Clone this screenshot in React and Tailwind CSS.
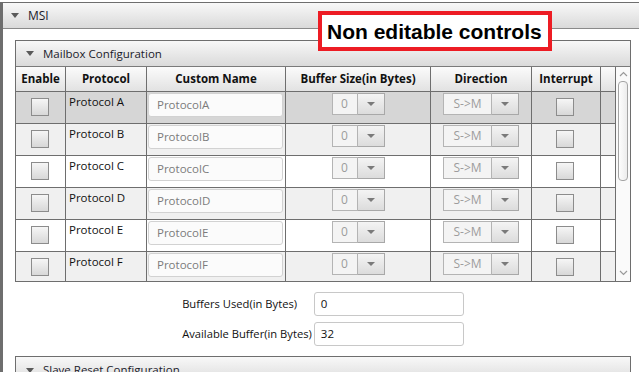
import React from "react";

const rows = [
  { name: "Protocol A", custom: "ProtocolA", bg: "bg-[#d6d6d6]" },
  { name: "Protocol B", custom: "ProtocolB", bg: "bg-[#f0f0f0]" },
  { name: "Protocol C", custom: "ProtocolC", bg: "bg-white" },
  { name: "Protocol D", custom: "ProtocolD", bg: "bg-[#f0f0f0]" },
  { name: "Protocol E", custom: "ProtocolE", bg: "bg-white" },
  { name: "Protocol F", custom: "ProtocolF", bg: "bg-[#f0f0f0]" },
];

const Tri = () => (
  <span className="w-0 h-0 border-l-[4px] border-r-[4px] border-t-[5px] border-l-transparent border-r-transparent border-t-[#5a5a5a]" />
);

const Check = () => (
  <div className="w-[18px] h-[18px] border border-[#8c8c8c] bg-linear-to-b from-[#f6f6f6] to-[#d8d8d8]" />
);

const Combo = ({ value, w }) => (
  <div className="flex h-[22px] mt-[1px]">
    <div className={`${w} border border-[#b4b4b4] bg-[#f4f4f4] text-[#9c9c9c] text-[12px] flex items-center justify-center`}>
      {value}
    </div>
    <div className="w-[27px] border border-l-0 border-[#a8a8a8] bg-linear-to-b from-[#f4f4f4] to-[#dcdcdc] flex items-center justify-center">
      <span className="w-0 h-0 border-l-[4px] border-r-[4px] border-t-[4px] border-l-transparent border-r-transparent border-t-[#7a7a7a]" />
    </div>
  </div>
);

const Header = ({ title, className = "" }) => (
  <div className={`flex items-center gap-[9px] bg-linear-to-b from-[#f8f8f8] to-[#dadada] ${className}`}>
    <Tri />
    <span className="text-[#1b1b2b]">{title}</span>
  </div>
);

const App = () => {
  return (
    <div className="relative w-[639px] h-[372px] overflow-hidden bg-white font-['Open_Sans',sans-serif] text-[11.5px] text-[#111]">
      <div className="mt-[2px] h-[370px] border-t border-l-[3px] border-[#6e6e6e]">
        <Header title="MSI" className="h-[26px] pl-[8px] border-b border-[#8a8a8a] text-[12px]" />

        <div className="pl-[12px] pt-[11px]">
          {/* Mailbox panel */}
          <div className="w-[616px] border border-[#6e6e6e]">
            <Header title="Mailbox Configuration" className="h-[26px] pl-[10px] border-b border-[#7a7a7a]" />
            <div className="flex">
              <div className="w-[599px]">
                <div className="flex h-[25px] border-b border-[#6e6e6e] bg-linear-to-b from-[#fbfbfb] to-[#e2e2e2] font-bold">
                  <div className="w-[50px] border-r border-[#6e6e6e] flex items-center justify-center">Enable</div>
                  <div className="w-[81px] border-r border-[#6e6e6e] flex items-center justify-center">Protocol</div>
                  <div className="w-[139px] border-r border-[#6e6e6e] flex items-center justify-center">Custom Name</div>
                  <div className="w-[145px] border-r border-[#6e6e6e] flex items-center justify-center">Buffer Size(in Bytes)</div>
                  <div className="w-[101px] border-r border-[#6e6e6e] flex items-center justify-center">Direction</div>
                  <div className="w-[69px] border-r border-[#6e6e6e] flex items-center justify-center">Interrupt</div>
                  <div className="flex-1" />
                </div>
                <div className="h-[189px] overflow-hidden">
                  {rows.map((r) => (
                    <div key={r.name} className={`flex h-[32px] border-b border-[#6e6e6e] ${r.bg}`}>
                      <div className="w-[50px] border-r border-[#6e6e6e] flex justify-center pt-[6px] pr-[2px]">
                        <Check />
                      </div>
                      <div className="w-[81px] border-r border-[#6e6e6e] pl-[3px] pt-[2px] leading-[16px]">{r.name}</div>
                      <div className="w-[139px] border-r border-[#6e6e6e] pl-[1px] pt-[1px]">
                        <div className="w-[135px] h-[24px] rounded-[3px] border border-[#d2d2d2] bg-[#fbfbfb] text-[#7c7c7c] flex items-center pl-[8px]">
                          {r.custom}
                        </div>
                      </div>
                      <div className="w-[145px] border-r border-[#6e6e6e] flex justify-center">
                        <Combo value="0" w="w-[26px]" />
                      </div>
                      <div className="w-[101px] border-r border-[#6e6e6e] flex justify-center">
                        <Combo value="S->M" w="w-[49px]" />
                      </div>
                      <div className="w-[69px] border-r border-[#6e6e6e] flex justify-center pt-[6px] pr-[3px]">
                        <Check />
                      </div>
                      <div className="flex-1" />
                    </div>
                  ))}
                </div>
              </div>
              {/* scrollbar */}
              <div className="w-[15px] border-l border-[#6e6e6e] bg-[#fafafa] flex flex-col items-center">
                <svg width="9" height="6" viewBox="0 0 9 6" className="mt-[4px]">
                  <path d="M1 5 L4.5 1.5 L8 5" fill="none" stroke="#9a9a9a" strokeWidth="1.2" />
                </svg>
                <div className="mt-[4px] w-[10px] h-[100px] rounded-[4px] border border-[#a4a4a4] bg-linear-to-r from-[#fdfdfd] to-[#ececec]" />
                <div className="flex-1" />
                <svg width="9" height="6" viewBox="0 0 9 6" className="mb-[5px]">
                  <path d="M1 1 L4.5 4.5 L8 1" fill="none" stroke="#9a9a9a" strokeWidth="1.2" />
                </svg>
              </div>
            </div>
          </div>

          {/* buffer summary */}
          <div className="w-[616px] flex justify-center mt-[10px]">
            <div className="grid grid-cols-[auto_150px] gap-x-[2px] gap-y-[6px] items-center text-[11.2px]">
              <div>Buffers Used(in Bytes)</div>
              <div className="h-[24px] rounded-[3px] border border-[#c8c8c8] bg-white flex items-center pl-[6px] text-[11.5px]">0</div>
              <div>Available Buffer(in Bytes)</div>
              <div className="h-[24px] rounded-[3px] border border-[#c8c8c8] bg-white flex items-center pl-[6px] text-[11.5px]">32</div>
            </div>
          </div>

          <div className="w-[616px] mt-[10px] border border-[#6e6e6e]">
            <Header title="Slave Reset Configuration" className="h-[26px] pl-[10px]" />
          </div>
        </div>
      </div>

      {/* annotation */}
      <div className="absolute left-[318px] top-[11px] w-[234px] h-[40px] border-[4px] border-[#ed1c24] bg-white flex items-center pl-[5px]">
        <span className="font-['Liberation_Sans',Arial,sans-serif] font-bold text-[21px] text-black leading-none">
          Non editable controls
        </span>
      </div>
    </div>
  );
};

export default App;
